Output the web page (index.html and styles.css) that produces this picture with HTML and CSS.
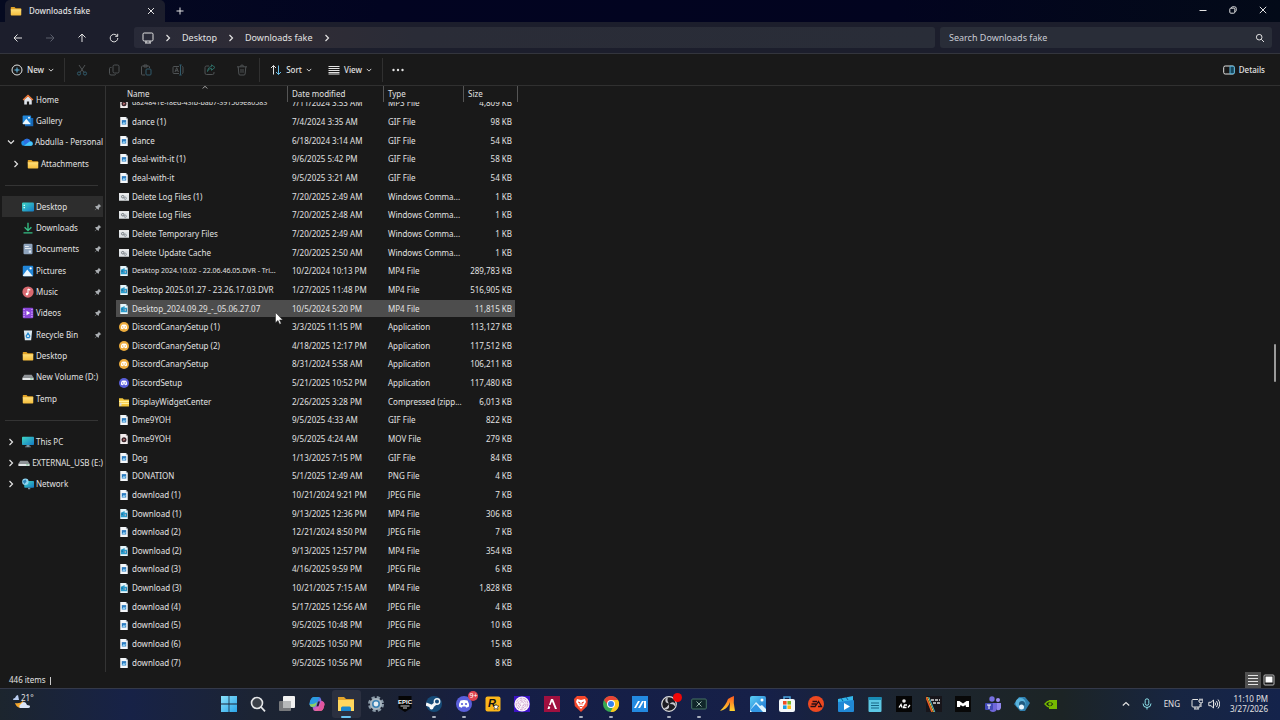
FILE: index.html
```html
<!DOCTYPE html>
<html lang="en">
<head>
<meta charset="utf-8">
<title>Downloads fake</title>
<link rel="stylesheet" href="styles.css">
</head>
<body>
<svg class="sprite" aria-hidden="true">
  <defs>
    <linearGradient id="g-folder" x2="0" y2="1"><stop stop-color="#ffe07a"/><stop offset="1" stop-color="#f5bd3c"/></linearGradient>
    <linearGradient id="g-teal" x2="1" y2="1"><stop stop-color="#3fd6c4"/><stop offset="1" stop-color="#1479c4"/></linearGradient>
    <linearGradient id="g-blue" x2="1" y2="1"><stop stop-color="#5bd0f5"/><stop offset="1" stop-color="#1b6fd0"/></linearGradient>
    <linearGradient id="g-start" x2="1" y2="1"><stop stop-color="#8be2fb"/><stop offset="1" stop-color="#2ba5ea"/></linearGradient>
    <linearGradient id="g-pilot" x2="1" y2="1"><stop stop-color="#2aa7f0"/><stop offset=".35" stop-color="#3b7bea"/><stop offset=".6" stop-color="#d65bc4"/><stop offset="1" stop-color="#f79a3c"/></linearGradient>
    <linearGradient id="g-fire" x2="0" y2="1"><stop stop-color="#ff5a1f"/><stop offset="1" stop-color="#ffd52e"/></linearGradient>
  </defs>
  <symbol id="folder" viewBox="0 0 16 16"><path d="M1 3.500a1 1 0 0 1 1-1h4l1.600 1.800H14a1 1 0 0 1 1 1V7H1z" fill="#e0a126"/><path d="M1 5.500h14V13a1 1 0 0 1-1 1H2a1 1 0 0 1-1-1z" fill="url(#g-folder)"/></symbol>
  <symbol id="zip" viewBox="0 0 16 16"><path d="M0 2h6l2 2h8v11H0z" fill="#f2c53a"/><path d="M0 6h16v2H0zM3 9h13v2H3z" fill="#fff0a0"/><path d="M1 9h3v5H1z" fill="#d8d8d8"/></symbol>
  <symbol id="image" viewBox="0 0 16 16"><path d="M2 0h9l3 3v13H2z" fill="#f4f7fa"/><path d="M11 0v3h3z" fill="#aeb8c2"/><path d="M4.500 5h7v7h-7z" fill="#2878be"/><path d="M5 11l3-4 1 2 2-2-1 4z" fill="#8ed0f5"/></symbol>
  <symbol id="video" viewBox="0 0 16 16"><path d="M2 0h9l3 3v13H2z" fill="#e8f6fb"/><path d="M11 0v3h3z" fill="#9fb4c0"/><path d="M3 6l6-3v3h4v7H3z" fill="#2a9ccc"/><path d="M4 7h2v2H4zM8 8h4v3H8z" fill="#0d5f93"/><path d="M9 8l3 1.500-3 1.500z" fill="#fff"/></symbol>
  <symbol id="media" viewBox="0 0 16 16"><path d="M2 0h9l3 3v13H2z" fill="#f3eeee"/><path d="M11 0v3h3z" fill="#b0a8a8"/><circle cx="8" cy="9" r="4" fill="#39262b"/><path d="M7 7l3 2-3 2z" fill="#f08a8a"/></symbol>
  <symbol id="cmd" viewBox="0 0 16 16"><path d="M0 2h16v12H0z" fill="#dfe3e6"/><path d="M0 2h16v2H0z" fill="#f8f8f8"/><circle cx="6" cy="7.500" r="2" fill="none" stroke="#6e747a" stroke-width="1.500"/><circle cx="10" cy="10" r="1.800" fill="none" stroke="#8a9096" stroke-width="1.500"/></symbol>
  <symbol id="face" viewBox="0 0 16 16"><path d="M4.500 4.500q3.500-1.200 7 0 1.800 3 1.500 6-1.400 1-2.800 1.200l-.7-1.200h-3l-.7 1.200Q4.400 11.500 3 10.500q-.3-3 1.500-6z" fill="#fff"/></symbol>
  <symbol id="canary" viewBox="0 0 16 16"><circle cx="8" cy="8" r="8" fill="#edac3c"/><use href="#face"/><circle cx="6" cy="8" r="1.100" fill="#edac3c"/><circle cx="10" cy="8" r="1.100" fill="#edac3c"/></symbol>
  <symbol id="discord" viewBox="0 0 16 16"><circle cx="8" cy="8" r="8" fill="#5a5fdb"/><use href="#face"/><circle cx="6" cy="8" r="1.100" fill="#5a5fdb"/><circle cx="10" cy="8" r="1.100" fill="#5a5fdb"/></symbol>
  <symbol id="pin" viewBox="0 0 16 16"><path d="M9.500 1.500l5 5-1.400.7-.6-.1-2.600 2.800.1 2.600-1.500 1.200-2.800-2.800L2 14.500 1.500 14l3.600-3.700L2.300 7.500 3.500 6l2.600.1 2.800-2.600-.1-.6z" fill="#a9adb1"/></symbol>
  <symbol id="right" viewBox="0 0 8 8"><path d="M2.500 1l3 3-3 3" fill="none" stroke="currentColor" stroke-width="1.200"/></symbol>
  <symbol id="down" viewBox="0 0 8 8"><path d="M1 2.500l3 3 3-3" fill="none" stroke="currentColor" stroke-width="1.200"/></symbol>
  <symbol id="desktop" viewBox="0 0 16 16"><rect y="2" width="16" height="12" rx="1.500" fill="url(#g-teal)"/><path d="M2 5h2v1.500H2zM2 8h2v1.500H2z" fill="#c8fff6"/></symbol>
  <symbol id="drive" viewBox="0 0 16 16"><path d="M3 5h10l2.500 4H.5z" fill="#8e9296"/><path d="M.5 9h15v3H.5z" fill="#e3e6e8"/><path d="M11 10h3v1h-3z" fill="#47b56b"/></symbol>
  <symbol id="photo" viewBox="0 0 16 16"><rect x="1" y="1" width="14" height="14" rx="1.500" fill="#2186d8"/><path d="M1 14l6-8 7.500 9H2z" fill="#eaf8ff"/><circle cx="11.500" cy="4.500" r="1.500" fill="#fff"/></symbol>
</svg>

<div class="window">
  <header class="titlebar">
    <div class="tab">
      <svg class="i12"><use href="#folder"/></svg>
      <span class="tab-name">Downloads fake</span>
      <button class="tab-close" aria-label="Close tab"><svg class="i8" viewBox="0 0 8 8"><path d="M1 1l6 6M7 1L1 7"/></svg></button>
    </div>
    <button class="tab-new" aria-label="New tab"><svg class="i8" viewBox="0 0 8 8"><path d="M4 .5v7M.5 4h7"/></svg></button>
    <div class="window-controls">
      <button aria-label="Minimize"><svg class="i8" viewBox="0 0 8 8"><path d="M.5 4.500h7"/></svg></button>
      <button aria-label="Restore"><svg class="i8" viewBox="0 0 8 8"><rect x=".8" y="2.200" width="5" height="5" rx="1"/><path d="M2.500 2V1.700Q2.500.8 3.400.8H5.700Q7.200.8 7.200 2.300V4.600Q7.200 5.500 6.300 5.500"/></svg></button>
      <button aria-label="Close"><svg class="i8" viewBox="0 0 8 8"><path d="M.8.8l6.400 6.400M7.200.8L.8 7.200"/></svg></button>
    </div>
  </header>

  <nav class="navbar" aria-label="Location">
    <div class="history">
      <button aria-label="Back"><svg class="i10" viewBox="0 0 10 10"><path d="M9 5H1.200M4.500 1.500L1 5l3.500 3.500"/></svg></button>
      <button aria-label="Forward" class="dim"><svg class="i10" viewBox="0 0 10 10"><path d="M1 5h7.800M5.500 1.500L9 5 5.500 8.500"/></svg></button>
      <button aria-label="Up"><svg class="i10" viewBox="0 0 10 10"><path d="M5 9V1.200M1.500 4.500L5 1l3.500 3.500"/></svg></button>
      <button aria-label="Refresh"><svg class="i10" viewBox="0 0 10 10"><path d="M8.800 5A3.800 3.800 0 1 1 7.600 2.300L8.600 3.200M8.700.8v2.500H6.200"/></svg></button>
    </div>
    <div class="address">
      <svg class="i12" viewBox="0 0 12 12"><rect x="1" y="1" width="10" height="8" rx="1.200"/><path d="M4 9v2M8 9v2M3 11h6"/></svg>
      <svg class="i8 sep"><use href="#right"/></svg>
      <a href="#">Desktop</a>
      <svg class="i8 sep"><use href="#right"/></svg>
      <a href="#">Downloads fake</a>
      <svg class="i8 sep"><use href="#right"/></svg>
    </div>
    <div class="search">
      <input type="text" aria-label="Search" placeholder="Search Downloads fake">
      <svg class="i10" viewBox="0 0 10 10"><circle cx="4.200" cy="4.200" r="2.800"/><path d="M6.300 6.300L9 9"/></svg>
    </div>
  </nav>

  <div class="toolbar">
    <button class="new"><svg class="i12" viewBox="0 0 12 12"><circle cx="6" cy="6" r="5"/><path d="M6 3.500v5M3.500 6h5" stroke="#66bde8"/></svg>New<svg class="i6"><use href="#down"/></svg></button>
    <div class="group">
      <button aria-label="Cut"><svg class="i12" viewBox="0 0 12 12"><path d="M3 1l5 7.500M9 1L4 8.500"/><circle cx="3" cy="9.500" r="1.600" stroke="#315b6c"/><circle cx="9" cy="9.500" r="1.600" stroke="#315b6c"/></svg></button>
      <button aria-label="Copy"><svg class="i12" viewBox="0 0 12 12"><rect x="5" y="1" width="6" height="8" rx="1.500"/><path d="M3.500 3.500H2.500Q1.500 3.500 1.500 4.500V9.500Q1.500 11 3 11H6.500Q7.500 11 7.500 10"/></svg></button>
      <button aria-label="Paste"><svg class="i12" viewBox="0 0 12 12"><path d="M5 11H2.500Q1.500 11 1.500 10V3Q1.500 2 2.500 2H8.500Q9.500 2 9.500 3V4M4 1h3v2H4z"/><rect x="6" y="5" width="5" height="6" rx="1" stroke="#315b6c"/></svg></button>
      <button aria-label="Rename"><svg class="i12" viewBox="0 0 12 12"><path d="M7 2.500H2Q1 2.500 1 3.500V8.500Q1 9.500 2 9.500H7M10 2.500Q11 2.500 11 3.500V8.500Q11 9.500 10 9.500M3 8l1.700-4.300L6.400 8M3.600 6.700h2.200"/><path d="M8.500 1v10M7.300 1h2.400M7.300 11h2.400" stroke="#315b6c"/></svg></button>
      <button aria-label="Share"><svg class="i12" viewBox="0 0 12 12"><path d="M5 2H2.500Q1 2 1 3.500V9Q1 10.500 2.500 10.500H8.500Q10 10.500 10 9V8"/><path d="M3.500 7.500Q4 4.500 7.500 4.300V6.300L11 3.400 7.500.8V2.500Q4 2.700 3.500 7.500z" stroke="#2d6a63"/></svg></button>
      <button aria-label="Delete"><svg class="i12" viewBox="0 0 12 12"><path d="M1 2.800h10M4.300 2.500Q4.500 1 6 1t1.700 1.500M2.200 3l.7 7Q3 11 4 11H8Q9 11 9.100 10L9.800 3M5 5v3.800M7 5v3.800"/></svg></button>
    </div>
    <button class="sort"><svg class="i12" viewBox="0 0 12 12"><path d="M3.500 10.500V1.500M1 4l2.500-2.500L6 4"/><path d="M8.500 1.500v9M6 8l2.500 2.500L11 8" stroke="#66bde8"/></svg>Sort<svg class="i6"><use href="#down"/></svg></button>
    <button class="view"><svg class="i12" viewBox="0 0 12 12"><path d="M.5 2.500h11M.5 4.500h11M.5 6.500h11M.5 8.500h11M.5 10h11"/></svg>View<svg class="i6"><use href="#down"/></svg></button>
    <button class="more" aria-label="See more"><svg class="i12" viewBox="0 0 12 12"><g fill="currentColor" stroke="none"><circle cx="1.500" cy="6" r="1.200"/><circle cx="6" cy="6" r="1.200"/><circle cx="10.500" cy="6" r="1.200"/></g></svg></button>
    <button class="details"><svg class="i12" viewBox="0 0 12 12"><rect x=".7" y="2" width="10.600" height="8" rx="1.500"/><path d="M7 2.200H10Q11.300 2.200 11.300 3.500V8.500Q11.300 9.800 10 9.800H7z" fill="#16465c" stroke="#58b4dc"/></svg>Details</button>
  </div>

  <main class="content">
    <aside class="sidebar">
      <ul class="tree">
        <li><span class="twist"></span><svg class="i12" viewBox="0 0 16 16"><path d="M3 7l5-4 5 4v7H9.500v-4h-3v4H3z" fill="#dfe4ea"/><path d="M1.500 8L8 2l6.500 6" fill="none" stroke="#ef7a3a" stroke-width="2"/></svg><a href="#">Home</a></li>
        <li><span class="twist"></span><svg class="i12" viewBox="0 0 16 16"><path d="M4 4h11v11H4z" fill="#1767b4"/><use href="#photo" width="13" height="13"/></svg><a href="#">Gallery</a></li>
        <li><span class="twist"><svg class="i8"><use href="#down"/></svg></span><svg class="i12" viewBox="0 0 16 16"><path d="M4 13a3.500 3.500 0 0 1-.3-7A5 5 0 0 1 12.600 7 3 3 0 0 1 13 13z" fill="#1c8ee8"/><path d="M3.700 6A5 5 0 0 1 12.600 7L5 12z" fill="#2f6ee0"/><path d="M4 13l7-5.500q4.500-.5 4.700 3Q15.500 13 13 13z" fill="#49c6f7"/></svg><a href="#">Abdulla - Personal</a></li>
        <li class="child"><span class="twist"><svg class="i8"><use href="#right"/></svg></span><svg class="i12"><use href="#folder"/></svg><a href="#">Attachments</a></li>
        <li class="rule"></li>
        <li class="current"><span class="twist"></span><svg class="i12"><use href="#desktop"/></svg><a href="#">Desktop</a><svg class="pin"><use href="#pin"/></svg></li>
        <li><span class="twist"></span><svg class="i12" viewBox="0 0 16 16"><path d="M8 1v10M3.500 7L8 11.500 12.500 7M2 14.500h12" fill="none" stroke="#35bf85" stroke-width="1.800"/></svg><a href="#">Downloads</a><svg class="pin"><use href="#pin"/></svg></li>
        <li><span class="twist"></span><svg class="i12" viewBox="0 0 16 16"><rect x="2" y="1" width="12" height="14" rx="1.500" fill="#8fa4bd"/><path d="M4 4h5v1H4zM4 7h8v1H4z" fill="#fff"/><path d="M9 10h3v3H9z" fill="#dce8f4"/></svg><a href="#">Documents</a><svg class="pin"><use href="#pin"/></svg></li>
        <li><span class="twist"></span><svg class="i12"><use href="#photo"/></svg><a href="#">Pictures</a><svg class="pin"><use href="#pin"/></svg></li>
        <li><span class="twist"></span><svg class="i12" viewBox="0 0 16 16"><circle cx="8" cy="8" r="7.500" fill="#d96a70"/><path d="M8 4v6.500M8 4l3 1.500" stroke="#fff" stroke-width="1.500" fill="none"/><circle cx="6.600" cy="10.800" r="1.700" fill="#fff"/></svg><a href="#">Music</a><svg class="pin"><use href="#pin"/></svg></li>
        <li><span class="twist"></span><svg class="i12" viewBox="0 0 16 16"><rect x="1" y="1" width="14" height="14" rx="1.500" fill="#8a45d8"/><path d="M2 2.500h1.500v1.500H2zM2 6h1.500v1.500H2zM2 9h1.500v1.500H2zM2 12h1.500v1.500H2zM12.500 2.500H14v1.500h-1.500zM12.500 6H14v1.500h-1.500zM12.500 9H14v1.500h-1.500zM12.500 12H14v1.500h-1.500z" fill="#d9b6ff"/><path d="M6 5l5 3-5 3z" fill="#fff"/></svg><a href="#">Videos</a><svg class="pin"><use href="#pin"/></svg></li>
        <li><span class="twist"></span><svg class="i12" viewBox="0 0 16 16"><path d="M2.500 2h11l-1.300 13H3.800z" fill="#dce9f1"/><path d="M5.500 9.500L8 5.500l2.500 4-1 2h-3z" fill="none" stroke="#2489d0" stroke-width="1.500"/></svg><a href="#">Recycle Bin</a><svg class="pin"><use href="#pin"/></svg></li>
        <li><span class="twist"></span><svg class="i12"><use href="#folder"/></svg><a href="#">Desktop</a></li>
        <li><span class="twist"></span><svg class="i12"><use href="#drive"/></svg><a href="#">New Volume (D:)</a></li>
        <li><span class="twist"></span><svg class="i12"><use href="#folder"/></svg><a href="#">Temp</a></li>
        <li class="rule"></li>
        <li><span class="twist"><svg class="i8"><use href="#right"/></svg></span><svg class="i12" viewBox="0 0 16 16"><rect y="1" width="16" height="11" rx="1" fill="url(#g-teal)"/><path d="M6 12h4v2h2v1H4v-1h2z" fill="#7b929f"/></svg><a href="#">This PC</a></li>
        <li><span class="twist"><svg class="i8"><use href="#right"/></svg></span><svg class="i12"><use href="#drive"/></svg><a href="#">EXTERNAL_USB (E:)</a></li>
        <li><span class="twist"><svg class="i8"><use href="#right"/></svg></span><svg class="i12" viewBox="0 0 16 16"><rect x="3" y="4" width="13" height="9" rx="1" fill="url(#g-teal)"/><path d="M8 13h3v2H8z" fill="#7b929f"/><circle cx="4.500" cy="5" r="4.300" fill="#8fd4f0"/><path d="M1 4l4-2 1 3-3 3z" fill="#2b83b8"/></svg><a href="#">Network</a></li>
      </ul>
    </aside>

    <section class="files" aria-label="Files">
      <table>
        <thead><tr><th scope="col" class="sorted">Name<svg class="i6" viewBox="0 0 8 8"><path d="M1 6l3-3 3 3"/></svg></th><th scope="col">Date modified</th><th scope="col">Type</th><th scope="col">Size</th></tr></thead>
        <tbody>
          <tr><td class="long"><svg class="i10"><use href="#media"/></svg><span>d824841e-f8ed-43fb-bab7-391569e80583</span></td><td>7/11/2024 3:53 AM</td><td>MP3 File</td><td>4,809 KB</td></tr>
          <tr><td><svg class="i10"><use href="#image"/></svg><span>dance (1)</span></td><td>7/4/2024 3:35 AM</td><td>GIF File</td><td>98 KB</td></tr>
          <tr><td><svg class="i10"><use href="#image"/></svg><span>dance</span></td><td>6/18/2024 3:14 AM</td><td>GIF File</td><td>54 KB</td></tr>
          <tr><td><svg class="i10"><use href="#image"/></svg><span>deal-with-it (1)</span></td><td>9/6/2025 5:42 PM</td><td>GIF File</td><td>58 KB</td></tr>
          <tr><td><svg class="i10"><use href="#image"/></svg><span>deal-with-it</span></td><td>9/5/2025 3:21 AM</td><td>GIF File</td><td>54 KB</td></tr>
          <tr><td><svg class="i10"><use href="#cmd"/></svg><span>Delete Log Files (1)</span></td><td>7/20/2025 2:49 AM</td><td>Windows Comma...</td><td>1 KB</td></tr>
          <tr><td><svg class="i10"><use href="#cmd"/></svg><span>Delete Log Files</span></td><td>7/20/2025 2:48 AM</td><td>Windows Comma...</td><td>1 KB</td></tr>
          <tr><td><svg class="i10"><use href="#cmd"/></svg><span>Delete Temporary Files</span></td><td>7/20/2025 2:49 AM</td><td>Windows Comma...</td><td>1 KB</td></tr>
          <tr><td><svg class="i10"><use href="#cmd"/></svg><span>Delete Update Cache</span></td><td>7/20/2025 2:50 AM</td><td>Windows Comma...</td><td>1 KB</td></tr>
          <tr><td class="long"><svg class="i10"><use href="#video"/></svg><span>Desktop 2024.10.02 - 22.06.46.05.DVR - Tri...</span></td><td>10/2/2024 10:13 PM</td><td>MP4 File</td><td>289,783 KB</td></tr>
          <tr><td><svg class="i10"><use href="#video"/></svg><span>Desktop 2025.01.27 - 23.26.17.03.DVR</span></td><td>1/27/2025 11:48 PM</td><td>MP4 File</td><td>516,905 KB</td></tr>
          <tr class="hover"><td><svg class="i10"><use href="#video"/></svg><span>Desktop_2024.09.29_-_05.06.27.07</span></td><td>10/5/2024 5:20 PM</td><td>MP4 File</td><td>11,815 KB</td></tr>
          <tr><td><svg class="i10"><use href="#canary"/></svg><span>DiscordCanarySetup (1)</span></td><td>3/3/2025 11:15 PM</td><td>Application</td><td>113,127 KB</td></tr>
          <tr><td><svg class="i10"><use href="#canary"/></svg><span>DiscordCanarySetup (2)</span></td><td>4/18/2025 12:17 PM</td><td>Application</td><td>117,512 KB</td></tr>
          <tr><td><svg class="i10"><use href="#canary"/></svg><span>DiscordCanarySetup</span></td><td>8/31/2024 5:58 AM</td><td>Application</td><td>106,211 KB</td></tr>
          <tr><td><svg class="i10"><use href="#discord"/></svg><span>DiscordSetup</span></td><td>5/21/2025 10:52 PM</td><td>Application</td><td>117,480 KB</td></tr>
          <tr><td><svg class="i10"><use href="#zip"/></svg><span>DisplayWidgetCenter</span></td><td>2/26/2025 3:28 PM</td><td>Compressed (zipp...</td><td>6,013 KB</td></tr>
          <tr><td><svg class="i10"><use href="#image"/></svg><span>Dme9YOH</span></td><td>9/5/2025 4:33 AM</td><td>GIF File</td><td>822 KB</td></tr>
          <tr><td><svg class="i10"><use href="#media"/></svg><span>Dme9YOH</span></td><td>9/5/2025 4:24 AM</td><td>MOV File</td><td>279 KB</td></tr>
          <tr><td><svg class="i10"><use href="#image"/></svg><span>Dog</span></td><td>1/13/2025 7:15 PM</td><td>GIF File</td><td>84 KB</td></tr>
          <tr><td><svg class="i10"><use href="#image"/></svg><span>DONATION</span></td><td>5/1/2025 12:49 AM</td><td>PNG File</td><td>4 KB</td></tr>
          <tr><td><svg class="i10"><use href="#image"/></svg><span>download (1)</span></td><td>10/21/2024 9:21 PM</td><td>JPEG File</td><td>7 KB</td></tr>
          <tr><td><svg class="i10"><use href="#video"/></svg><span>Download (1)</span></td><td>9/13/2025 12:36 PM</td><td>MP4 File</td><td>306 KB</td></tr>
          <tr><td><svg class="i10"><use href="#image"/></svg><span>download (2)</span></td><td>12/21/2024 8:50 PM</td><td>JPEG File</td><td>7 KB</td></tr>
          <tr><td><svg class="i10"><use href="#video"/></svg><span>Download (2)</span></td><td>9/13/2025 12:57 PM</td><td>MP4 File</td><td>354 KB</td></tr>
          <tr><td><svg class="i10"><use href="#image"/></svg><span>download (3)</span></td><td>4/16/2025 9:59 PM</td><td>JPEG File</td><td>6 KB</td></tr>
          <tr><td><svg class="i10"><use href="#video"/></svg><span>Download (3)</span></td><td>10/21/2025 7:15 AM</td><td>MP4 File</td><td>1,828 KB</td></tr>
          <tr><td><svg class="i10"><use href="#image"/></svg><span>download (4)</span></td><td>5/17/2025 12:56 AM</td><td>JPEG File</td><td>4 KB</td></tr>
          <tr><td><svg class="i10"><use href="#image"/></svg><span>download (5)</span></td><td>9/5/2025 10:48 PM</td><td>JPEG File</td><td>10 KB</td></tr>
          <tr><td><svg class="i10"><use href="#image"/></svg><span>download (6)</span></td><td>9/5/2025 10:50 PM</td><td>JPEG File</td><td>15 KB</td></tr>
          <tr><td><svg class="i10"><use href="#image"/></svg><span>download (7)</span></td><td>9/5/2025 10:56 PM</td><td>JPEG File</td><td>8 KB</td></tr>
        </tbody>
      </table>
      <div class="scroll-thumb"></div>
    </section>
  </main>

  <footer class="status">
    <span class="count">446 items</span>
    <button class="active" aria-label="Details view"><svg class="i12" viewBox="0 0 12 12"><path d="M1 1.500h10M1 4.500h10M1 7.500h10M1 10.500h10"/></svg></button>
    <button aria-label="Large icons view"><svg class="i12" viewBox="0 0 12 12"><rect x="1" y="1" width="10" height="10" rx="1" stroke="#b8b8b8"/><rect x="3" y="3" width="6" height="5" fill="#fff" stroke="#fff"/></svg></button>
  </footer>
</div>

<div class="taskbar">
  <button class="weather" aria-label="Weather"><svg width="20" height="18" viewBox="0 0 20 18"><path d="M1 7q0-2 2-2 1-3 3-3l1 5z" fill="#b9cdf0"/><path d="M3 10q5 1 8-2l2 7H8q-4-1-5-5z" fill="#f5a72c"/><path d="M8 15a2.500 2.500 0 0 1 1-4q1-2 3-2t3 3q3 0 3 1.500t-2 1.500z" fill="#dbe5f8"/></svg><span>21°</span></button>

  <div class="apps">
    <button aria-label="Start"><svg viewBox="0 0 16 16"><path d="M0 0h7.600v7.600H0zM8.400 0H16v7.600H8.400zM0 8.400h7.600V16H0zM8.400 8.400H16V16H8.400z" fill="url(#g-start)"/></svg></button>
    <button aria-label="Search"><svg viewBox="0 0 16 16"><circle cx="7" cy="7" r="5.500" fill="#3b4048" stroke="#e4e6e8" stroke-width="1.600"/><path d="M11 11l4 4.300" stroke="#e4e6e8" stroke-width="1.800"/></svg></button>
    <button aria-label="Task view"><svg viewBox="0 0 16 16"><rect x="4" y="0" width="12" height="12" rx="1" fill="#f1f1f1"/><rect y="5" width="12" height="10" rx="1" fill="#77797c"/><path d="M4 5h8v7H4z" fill="#b7b9ba"/></svg></button>
    <button aria-label="Copilot"><svg viewBox="0 0 16 16"><path d="M5 1h5q1.500 0 2 2l.5 2Q14 5 15 6.500q1 1.500 0 4Q14 15 11 15H6q-1.500 0-2-2l-.5-2Q1 11 .5 8 .500 5 2 3q1-2 3-2z" fill="url(#g-pilot)"/><path d="M5 1h5L7.500 9Q6.500 11 3.500 11 1 11 .5 8 2 1 5 1z" fill="#2b9be0"/><path d="M.7 8Q1 11 3.500 11 6.500 11 7 9L8 6q-4 3-7.300 2z" fill="#8fce63"/><path d="M12.500 5Q14 5 15 6.500q1 1.500 0 4Q14 15 11 15H8q2-1 2.500-4z" fill="#e0559e"/><path d="M9 5.500L7.500 10.500l2-.2L11 5.500z" fill="#251d36"/></svg></button>
    <button class="current running" aria-label="File Explorer"><svg viewBox="0 0 16 16"><path d="M0 1h6l2 2h8v12H0z" fill="#e4a52b"/><path d="M0 4h16v11H0z" fill="#ffd75e"/><path d="M3 15v-3q0-1.500 1.500-1.500h7Q13 10.500 13 12v3z" fill="#1887ce"/></svg></button>
    <button aria-label="Settings"><svg viewBox="0 0 16 16"><circle cx="8" cy="8" r="6.500" fill="none" stroke="#8a99a6" stroke-width="3" stroke-dasharray="3.100 2"/><circle cx="8" cy="8" r="5" fill="#3b82b4" stroke="#aab7c1" stroke-width="2"/><circle cx="8" cy="8" r="2.400" fill="#e4edf3"/></svg></button>
    <button aria-label="Epic Games"><svg viewBox="0 0 16 16"><path d="M1.500 0h13v12L8 16l-6.500-4z" fill="#050505"/><text x="8" y="7.500" text-anchor="middle" class="epic">EPIC</text><path d="M3.500 10h9M6 12h4" stroke="#ccc"/></svg></button>
    <button class="running" aria-label="Steam"><svg viewBox="0 0 16 16"><circle cx="8" cy="8" r="8" fill="#164b78"/><path d="M0 8L6 10.500l4-3.500" fill="none" stroke="#f3f6f8" stroke-width="3"/><circle cx="11" cy="5.500" r="2.700" fill="#164b78" stroke="#f3f6f8" stroke-width="1.400"/><circle cx="5.500" cy="11.500" r="2" fill="#fff"/></svg></button>
    <button class="running" aria-label="Discord, 9+ notifications"><svg viewBox="0 0 16 16"><use href="#discord"/></svg><span class="badge">9+</span></button>
    <button aria-label="Rockstar Games"><svg viewBox="0 0 16 16"><rect x=".5" y=".5" width="15" height="15" rx="2" fill="#fcb61a"/><text x="3" y="11" class="rock">R</text><path d="M11 8l1 2h2l-1.500 1.500.5 2-2-1-2 1 .5-2L8 10h2z" fill="#fff" stroke="#222" stroke-width=".6"/></svg></button>
    <button aria-label="Fingerprint app"><svg viewBox="0 0 16 16"><path d="M0 0h16v16H0z" fill="#3c12c4"/><circle cx="8" cy="8" r="7.600" fill="#faf5fb"/><g fill="none" stroke="#c48dc0" stroke-width=".8" stroke-dasharray="3 1"><circle cx="8" cy="8" r="5.800"/><circle cx="8" cy="8" r="4"/><circle cx="8" cy="8" r="2.200"/></g></svg></button>
    <button aria-label="Crimson app"><svg viewBox="0 0 16 16"><path d="M0 0h16v16H0z" fill="#a0103f"/><path d="M7 3h2l4 10h-2L8 5.500 6.500 9H5z" fill="#fff"/><path d="M4.500 10l-1 3h2l.8-2z" fill="#fff"/></svg></button>
    <button class="running" aria-label="Brave"><svg viewBox="0 0 16 16"><path d="M4 0h8l3 3-.8 7L8 16l-6.200-6L1 3z" fill="#f4472b"/><path d="M4 3l4 1 4-1 1 3-2 3.500L8 13 5 9.500 3 6z" fill="#fff"/><path d="M5 6l2 .7v2M11 6l-2 .7v2M6.500 10.500h3" stroke="#f4472b" fill="none"/></svg></button>
    <button class="running" aria-label="Chrome"><svg viewBox="0 0 16 16"><circle cx="8" cy="8" r="8" fill="#38a852"/><path d="M1 4a8 8 0 0 1 14 0L8 8H4z" fill="#e94335"/><path d="M8 4h7a8 8 0 0 1-7.500 12L11 9z" fill="#fcc91f"/><circle cx="8" cy="8" r="4" fill="#fff"/><circle cx="8" cy="8" r="3" fill="#3582ee"/></svg></button>
    <button aria-label="Monitor app"><svg viewBox="0 0 16 16"><path d="M0 0h16v16H0z" fill="#2389e0"/><path d="M2 12h2L8 5H6zM6 12h2l4-7h-2zM12 5h2v7h-2z" fill="#fff"/></svg></button>
    <button class="running" aria-label="OBS, recording"><svg viewBox="0 0 16 16"><circle cx="8" cy="8" r="7.300" fill="#1d1c22" stroke="#ddd" stroke-width="1.200"/><g fill="#c9c9d0"><path id="blade" d="M8 7.500Q3.500 7 4.500 3q1-1.500 2.500-1.500Q5.500 4.500 8 7.500z"/><use href="#blade" transform="rotate(120 8 8)"/><use href="#blade" transform="rotate(240 8 8)"/></g></svg><span class="dot"></span></button>
    <button class="running" aria-label="Capture app"><svg viewBox="0 0 16 16"><rect x=".7" y="3" width="14.600" height="10" rx="1" fill="#10262a" stroke="#467264"/><path d="M5.500 5.500l5 5M10.500 5.500l-5 5" stroke="#9ab5ab"/></svg></button>
    <button aria-label="Flame app"><svg viewBox="0 0 16 16"><path d="M0 15Q6 9 8 3q3-2 6-3-1 7 1 15H9.500L10 6Q8 12 3 14z" fill="url(#g-fire)"/></svg></button>
    <button aria-label="Photos"><svg viewBox="0 0 16 16"><rect width="16" height="16" rx="2" fill="url(#g-blue)"/><path d="M0 14l6-8 4 4 2-1 4 4v3H0z" fill="#dff5ff"/><path d="M0 14l6-6 7 8H2z" fill="#3196e4"/><circle cx="12" cy="4" r="1.500" fill="#fff"/></svg></button>
    <button aria-label="Microsoft Store"><svg viewBox="0 0 16 16"><path d="M5 4V1h6v3" fill="none" stroke="#4ba4de" stroke-width="1.500"/><rect y="3" width="16" height="13" rx="2" fill="#f4f7f9"/><path d="M4 5h3.600v3.600H4z" fill="#f04e23"/><path d="M8.400 5H12v3.600H8.400z" fill="#76b82a"/><path d="M4 9.400h3.600V13H4z" fill="#189de0"/><path d="M8.400 9.400H12V13H8.400z" fill="#fcb817"/></svg></button>
    <button aria-label="EA"><svg viewBox="0 0 16 16"><circle cx="8" cy="8" r="8" fill="#ed4820"/><path d="M4.500 5.500H9M3.500 8H8M2.500 10.500H7l3.500-5 3 5H10" fill="none" stroke="#250d15" stroke-width="1.300"/></svg></button>
    <button aria-label="Movies"><svg viewBox="0 0 16 16"><rect y="4" width="16" height="12" rx="1" fill="#2189d6"/><path d="M0 3l15-3v4L0 6z" fill="#34b7ec"/><path d="M3 2l2 3M8 1l2 3" stroke="#0d5a96"/><path d="M6 7l6 3.500L6 14z" fill="#fff"/></svg></button>
    <button aria-label="Notepad"><svg viewBox="0 0 16 16"><rect x="1.500" y="1" width="13" height="15" rx="1" fill="#5cc8e4"/><path d="M1.500 1h13v3h-13z" fill="#188bb4"/><path d="M4 7h8M4 9.500h8M4 12h8" stroke="#166685"/></svg></button>
    <button aria-label="Assetto Corsa"><svg viewBox="0 0 16 16"><path d="M0 0h16v16H0z" fill="#050505"/><circle cx="8" cy="5" r="1.800" fill="#eee"/><path d="M3 11.500l2-3 1 3M11 9H8.500L7.500 11.500h3M12 11.500l2-2.500" stroke="#fff" fill="none" stroke-width="1.300"/></svg></button>
    <button aria-label="Forza"><svg viewBox="0 0 16 16"><path d="M0 0h16v16H0z" fill="#17151a"/><path d="M0 1l6 15" stroke="#ef5d27" stroke-width="1.500"/><path d="M1.500 1l6 15" stroke="#f0c53a"/><path d="M2.800 1l6 15" stroke="#49b2c7"/><path d="M5 4h9M7 7h8" stroke="#ddd" stroke-width="1.600" stroke-dasharray="3 1"/></svg></button>
    <button aria-label="Most Wanted"><svg viewBox="0 0 16 16"><path d="M0 0h16v16H0z" fill="#080808"/><path d="M2 11V5h2.500L8 7.500 11.500 5H14v6h-3l-.5-2L8 10.500 5.500 9 5 11z" fill="#fff"/></svg></button>
    <button aria-label="Teams"><svg viewBox="0 0 16 16"><circle cx="7" cy="3" r="2.700" fill="#766fe0"/><circle cx="13" cy="4" r="2" fill="#9f8ff3"/><path d="M4 7h8v6q-1 3-4 3t-4-3z" fill="#7067db"/><path d="M12 7h4v5q-1 3-4 2z" fill="#9187ed"/><rect y="7" width="8" height="7" rx="1" fill="#4149b6"/><path d="M2 9h4M4 9v4" stroke="#fff"/></svg></button>
    <button aria-label="Helper app"><svg viewBox="0 0 16 16"><path d="M5 1h6l5 6-5 8H6L0 8z" fill="#2f7fae"/><circle cx="6.500" cy="7" r="5" fill="#58b3dc"/><circle cx="8" cy="8" r="3" fill="#205a80"/><circle cx="7.500" cy="11" r="2.500" fill="#e7f6ff"/></svg></button>
    <button aria-label="NVIDIA"><svg viewBox="0 0 16 16"><path d="M6 4h8v9H6z" fill="#76b900"/><path d="M2 8q5-6 9 0-4 6-9 0z" fill="#182413" stroke="#76b900" stroke-width="1.300"/><circle cx="7" cy="8" r="1.700" fill="#76b900"/></svg></button>
  </div>

  <div class="tray">
    <button aria-label="Show hidden icons"><svg class="i8" viewBox="0 0 8 8"><path d="M.8 5.500L4 2.500l3.200 3" stroke-width="1.200"/></svg></button>
    <button aria-label="Microphone"><svg class="i12" viewBox="0 0 12 12"><rect x="4.200" y=".8" width="3.600" height="6.500" rx="1.800" stroke="#8be0ea"/><path d="M2 5.500a4 4 0 0 0 8 0M6 9.500v2" stroke="#8be0ea"/></svg></button>
    <button>ENG</button>
    <button class="system" aria-label="Network and volume"><svg class="i12" viewBox="0 0 12 12"><path d="M7 1.500H2Q1 1.500 1 2.500V8Q1 9 2 9H9V6M3 11h5M4 9v2M7 9v2M9 .5V2M11 .5V2M8 2h4v2q-2 2-4 0zM10 5v4"/></svg><svg class="i12" viewBox="0 0 12 12"><path d="M.8 4.300H3L5.500 2v8L3 7.700H.8zM7 4.500q1.200 1.500 0 3M8.500 3q2.500 3 0 6M10 1.500q3.500 4.500 0 9"/></svg></button>
    <button class="clock"><span>11:10 PM</span><span>3/27/2026</span></button>
  </div>
</div>

<svg class="cursor" viewBox="0 0 8 13" aria-hidden="true"><path d="M.5.5v10.200L3 8.400l1.600 3.800 1.600-.7L4.600 7.900h3.100z" fill="#fff" stroke="#222" stroke-width=".5"/></svg>
</body>
</html>
```
FILE: styles.css
```css
* { box-sizing: border-box; }

body {
  margin: 0;
  height: 100vh;
  display: flex;
  flex-direction: column;
  overflow: hidden;
  background: #191919;
  color: #e2e2e2;
  font: 8px/12px "Noto Sans", "Open Sans", sans-serif;
}

button {
  display: flex;
  align-items: center;
  justify-content: center;
  padding: 0;
  border: 0;
  background: none;
  color: inherit;
  font: inherit;
}

a { color: inherit; text-decoration: none; white-space: nowrap; }

svg { flex: none; fill: none; stroke: currentColor; stroke-width: 1; }
symbol, .apps svg, .tree svg, .weather svg { stroke: none; }
.sprite { position: absolute; width: 0; height: 0; }
.i6 { width: 6px; height: 6px; }
.i8 { width: 8px; height: 8px; }
.i10 { width: 10px; height: 10px; }
.i12 { width: 12px; height: 12px; }

.window { flex: 1; min-height: 0; display: flex; flex-direction: column; }

/* title bar */
.titlebar {
  display: flex;
  height: 22px;
  padding-left: 5px;
  background: linear-gradient(90deg, #050a20, #020421 30%, #02041f 70%, #030a18);
}
.tab {
  display: flex;
  align-items: center;
  width: 160px;
  padding: 0 8px 0 5px;
  border-radius: 5px 5px 0 0;
  background: #1c1e2c;
  font-weight: 500;
}
.tab-name { flex: 1; padding-left: 7px; }
.tab-close { width: 12px; height: 12px; }
.tab-new { width: 30px; }
.window-controls { display: flex; margin-left: auto; padding-right: 2px; }
.window-controls button { width: 30px; height: 20px; }

/* navigation */
.navbar {
  display: flex;
  gap: 5px;
  height: 32px;
  padding: 5px 8px 5px 6px;
  border-bottom: 1px solid #33353d;
  background: #1c1e2c;
  font-size: 9px;
}
.history { display: flex; gap: 8px; width: 123px; }
.history button { width: 24px; }
.dim { color: #5a5e6b; }
.address, .search { display: flex; align-items: center; border-radius: 3px; }
.address {
  flex: 1;
  padding-left: 8px;
  background: linear-gradient(90deg, #282a38, #302c35 18%, #2a2c37 35%, #292d38);
}
.sep { margin: 0 10px; }
.search { width: 332px; padding: 0 7px 0 9px; background: #292d38; }
.search input {
  flex: 1;
  min-width: 0;
  padding: 0;
  border: 0;
  outline: 0;
  background: none;
  color: #c9ccd4;
  font: inherit;
}
.search input::placeholder { color: #c9ccd4; opacity: 1; }

/* commands */
.toolbar {
  display: flex;
  align-items: center;
  height: 32px;
  padding: 0 15px 0 11px;
  border-bottom: 1px solid #303030;
  font-weight: 500;
}
.toolbar button { gap: 4px; height: 24px; }
.new { width: 43px; }
.group {
  display: flex;
  gap: 8px;
  margin-left: 10px;
  padding: 0 5px;
  border: solid #303030;
  border-width: 0 1px;
  color: #4f5355;
}
.group button { width: 24px; }
.sort { width: 42px; margin-left: 10px; }
.view { width: 44px; margin-left: 16px; }
.more { width: 31px; margin-left: 10px; border-left: 1px solid #303030; }
.details { margin-left: auto; }

/* folder tree */
.content { flex: 1; min-height: 0; display: flex; }
.sidebar {
  width: 106px;
  padding: 3px 2px 0;
  border-right: 1px solid #333;
  overflow: hidden;
}
.tree {
  display: grid;
  grid-template-rows: repeat(19, 1fr);
  height: 406px;
  margin: 0;
  padding: 0;
  list-style: none;
}
.tree li { display: flex; align-items: center; min-width: 0; }
.tree a { padding-left: 2px; }
.twist { display: flex; width: 20px; padding-left: 5px; }
.twist svg { stroke: currentColor; }
.tree .child { padding-left: 5px; }
.tree .rule::before { content: ""; flex: 1; height: 1px; margin: 0 5px 0 3px; background: #343434; }
.tree .current { background: #2d2d2d; }
.pin { width: 8px; height: 8px; margin-left: auto; margin-right: 1px; }

/* file list */
.files { position: relative; flex: 1; min-width: 0; padding-left: 10px; }
table { display: flex; flex-direction: column; width: 402px; height: 100%; }
thead { display: block; }
tr { display: grid; grid-template-columns: 172px 96px 80px 1fr; align-items: center; }
th {
  height: 16px;
  padding: 2px 0 0 4px;
  border-right: 1px solid #555;
  text-align: left;
  font-weight: 400;
}
.sorted { position: relative; padding-left: 11px; }
.sorted svg { position: absolute; top: -2px; left: 86px; }
tbody {
  flex: 1;
  min-height: 0;
  display: grid;
  grid-auto-rows: calc((100% + 8px) / 31);
  align-content: end;
  overflow: hidden;
}
tbody tr { margin: 1px 3px 1px 0; }
td { padding: 0 0 0 4px; white-space: nowrap; }
td:first-child { display: flex; align-items: center; gap: 3px; min-width: 0; padding-left: 3px; }
td:last-child { padding-right: 3px; text-align: right; }
.long { font-size: 7px; }
.hover { background: #4d4d4d; }
.scroll-thumb {
  position: absolute;
  top: 44%;
  right: 4px;
  width: 2px;
  height: 38px;
  border-radius: 1px;
  background: #9a9a9a;
}

/* status */
.status { display: flex; align-items: center; height: 16px; padding: 0 3px 0 9px; }
.count { margin-right: auto; }
.count::after { content: ""; display: inline-block; height: 8px; margin-left: 4px; border-left: 1px solid #ccc; vertical-align: middle; }
.status button { width: 16px; height: 16px; }
.status .active { background: #505050; }

/* taskbar */
.taskbar {
  display: grid;
  grid-template-columns: 1fr 852px 1fr;
  height: 32px;
  border-top: 1px solid #34394a;
  background: linear-gradient(90deg, #1c252e, #172247 10%, #1c2433 20%, #1b2233 30%, #151e46 39%, #162048 60%, #1c2530 70%, #1c2425 83%, #172542 92%, #14234b);
}
.weather { align-items: flex-start; justify-content: flex-start; padding: 4px 0 0 12px; }
.weather span { margin-left: -11px; line-height: 10px; }
.apps { display: grid; grid-template-columns: repeat(29, 1fr); align-items: start; padding-top: 1px; }
.apps button { position: relative; height: 28px; border-radius: 3px; }
.apps svg { width: 16px; height: 16px; }
.apps .current { background: #2b3040; }
.running::after {
  content: "";
  position: absolute;
  bottom: 0;
  width: 4px;
  height: 2px;
  border-radius: 1px;
  background: #a9afbd;
}
.apps .current::after { width: 10px; background: #6bc5f0; }
.badge {
  position: absolute;
  top: 1px;
  right: 0;
  width: 10px;
  height: 10px;
  border-radius: 5px;
  background: #e04450;
  color: #fff;
  font-size: 7px;
  line-height: 10px;
}
.dot { position: absolute; top: 3px; right: 2px; width: 9px; height: 9px; border-radius: 5px; background: #f00808; }
.epic { fill: #fff; font: bold 6px "Liberation Sans", sans-serif; }
.rock { fill: #111; font: italic bold 11px "Liberation Sans", sans-serif; }
.tray { display: flex; align-items: center; justify-content: flex-end; padding-right: 12px; padding-bottom: 2px; }
.tray button { margin-left: 11px; }
.tray .system { gap: 5px; }
.tray .clock { flex-direction: column; align-items: flex-end; margin-left: 10px; line-height: 10px; }

.cursor { position: absolute; left: 275px; top: 312px; width: 8px; height: 13px; }
```
